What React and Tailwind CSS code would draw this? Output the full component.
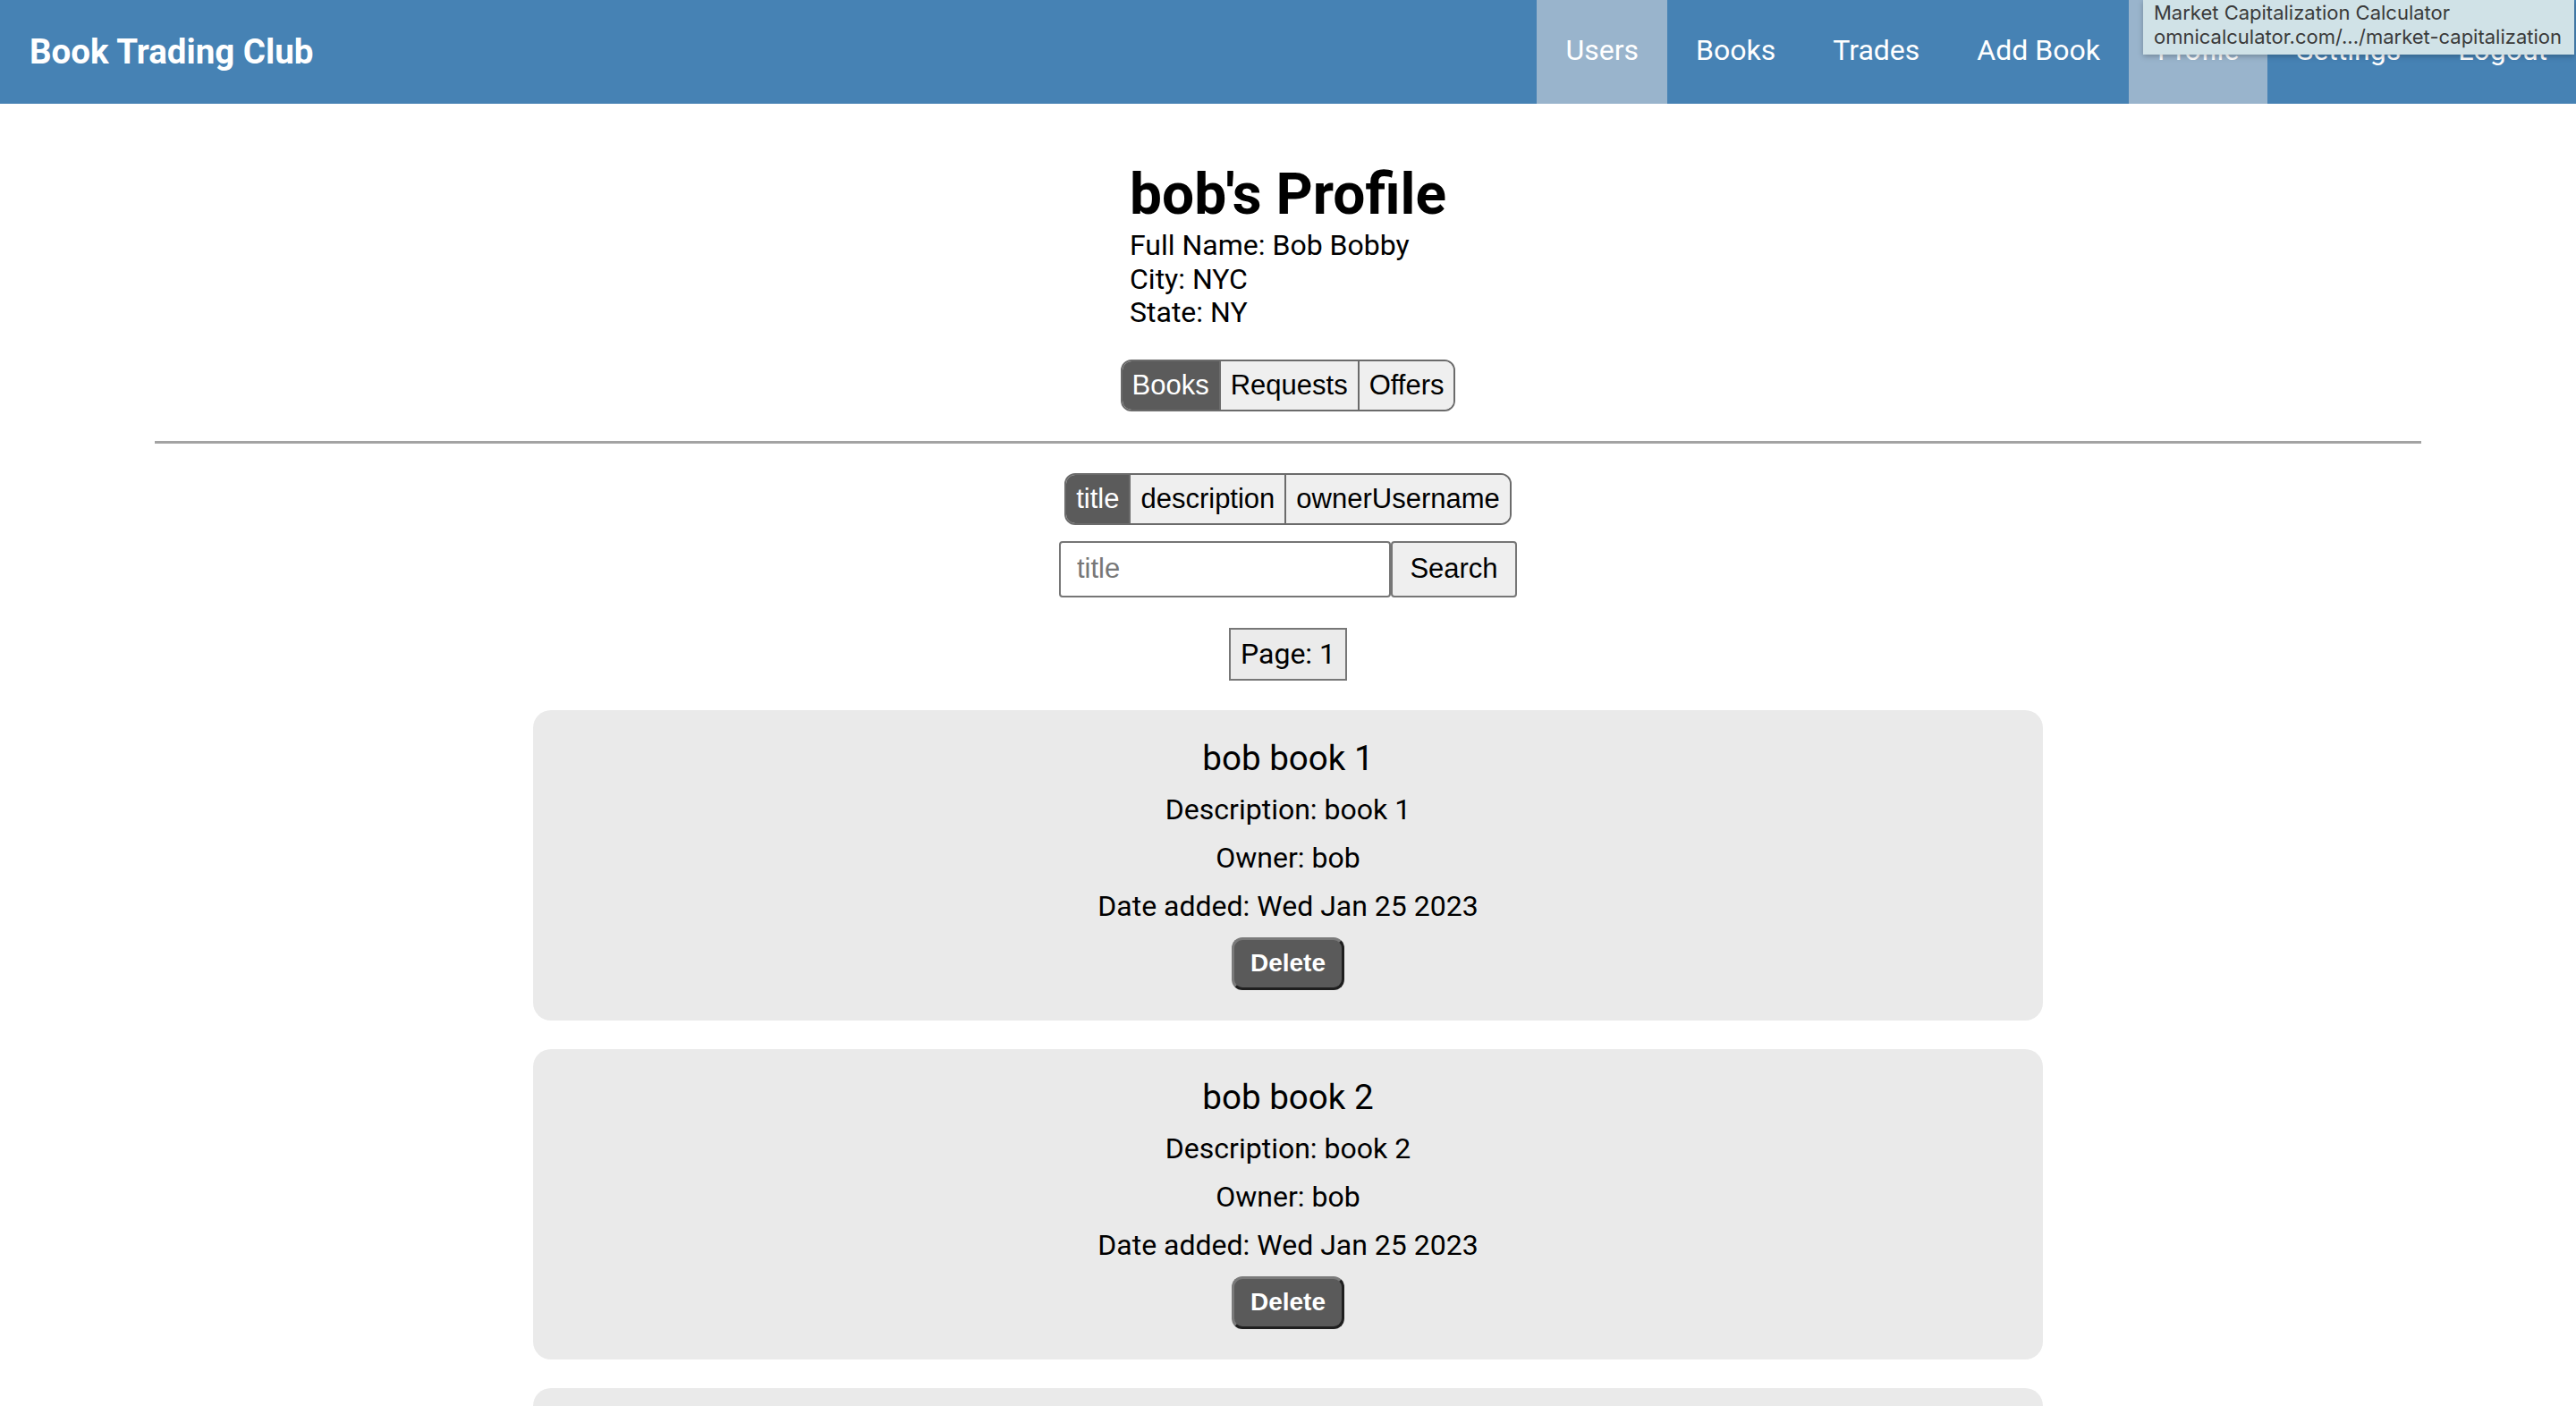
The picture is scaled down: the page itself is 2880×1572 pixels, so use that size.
import React, { useState } from "react";

const navItems = ["Users", "Books", "Trades", "Add Book", "Profile", "Settings", "Logout"];
const activeNav = ["Users", "Profile"];

const books = [
  { title: "bob book 1", description: "book 1", owner: "bob", date: "Wed Jan 25 2023" },
  { title: "bob book 2", description: "book 2", owner: "bob", date: "Wed Jan 25 2023" },
  { title: "bob book 3", description: "book 3", owner: "bob", date: "Wed Jan 25 2023" },
];

function Segmented({ options, active, onChange }) {
  return (
    <div className="flex overflow-hidden rounded-[12px] border-2 border-[#6b6b6b] font-['Liberation_Sans',Arial,sans-serif] text-[31px] leading-[36px]">
      {options.map((opt, i) => (
        <button
          key={opt}
          onClick={() => onChange(opt)}
          className={`px-[11px] py-[9px] ${i > 0 ? "border-l-2 border-[#6b6b6b]" : ""} ${
            active === opt ? "bg-[#5b5b5b] text-white" : "bg-[#efefef] text-black"
          }`}
        >
          {opt}
        </button>
      ))}
    </div>
  );
}

function BookCard({ book }) {
  return (
    <div className="flex w-[1688px] flex-col items-center gap-[16px] rounded-[20px] bg-[#eaeaea] pt-[31px] pb-[34px] text-black">
      <h3 className="text-[38.6px] leading-[45px] font-normal">{book.title}</h3>
      <p className="text-[32px] leading-[38px]">Description: {book.description}</p>
      <p className="text-[32px] leading-[38px]">Owner: {book.owner}</p>
      <p className="text-[32px] leading-[38px]">Date added: {book.date}</p>
      <button className="h-[59px] w-[126px] rounded-[12px] border-[3px] border-t-[#7a7a7a] border-l-[#7a7a7a] border-r-[#1f1f1f] border-b-[#1f1f1f] bg-[#5a5a5a] font-['Liberation_Sans',Arial,sans-serif] text-[28px] font-bold text-white">
        Delete
      </button>
    </div>
  );
}

export default function App() {
  const [tab, setTab] = useState("Books");
  const [field, setField] = useState("title");

  return (
    <div className="relative min-h-screen bg-white font-['Roboto',sans-serif] text-black">
      {/* Navbar */}
      <nav className="flex h-[116px] items-stretch bg-[#4682b4] text-white">
        <div className="flex items-center pl-[33px] text-[38.5px] font-bold">Book Trading Club</div>
        <div className="ml-auto flex">
          {navItems.map((item) => (
            <a
              key={item}
              className={`flex items-center px-[32px] pb-[4px] text-[32px] ${
                activeNav.includes(item) ? "bg-[#99b4cc]" : ""
              }`}
            >
              {item}
            </a>
          ))}
        </div>
      </nav>

      {/* Browser tooltip overlay */}
      <div className="absolute top-0 right-[2px] w-[482px] bg-[#d0e2e7] pl-[12px] pt-[1px] pb-[6px] font-['Inter',sans-serif] text-[22px] leading-[27px] text-[#3a3a3a] shadow-[0_2px_6px_rgba(0,0,0,0.25)]">
        <div>Market Capitalization Calculator</div>
        <div>omnicalculator.com/.../market-capitalization</div>
      </div>

      {/* Profile header */}
      <div className="mx-auto mt-[63px] w-fit">
        <h1 className="text-[64px] leading-[77px] font-bold">bob's Profile</h1>
        <div className="text-[32px] leading-[37.5px]">
          <div>Full Name: Bob Bobby</div>
          <div>City: NYC</div>
          <div>State: NY</div>
        </div>
      </div>

      <div className="mt-[33px] flex justify-center">
        <Segmented options={["Books", "Requests", "Offers"]} active={tab} onChange={setTab} />
      </div>

      <div className="mx-auto mt-[33px] h-[3px] w-[88%] bg-[#a3a3a3]" />

      <div className="mt-[33px] flex justify-center">
        <Segmented options={["title", "description", "ownerUsername"]} active={field} onChange={setField} />
      </div>

      <div className="mt-[18px] flex justify-center font-['Liberation_Sans',Arial,sans-serif] text-[31px]">
        <input
          placeholder={field}
          className="h-[63px] w-[371px] rounded-[4px] border-2 border-[#767676] bg-white px-[18px] text-black placeholder:text-[#777]"
        />
        <button className="h-[63px] w-[141px] rounded-[4px] border-2 border-[#767676] bg-[#efefef] text-black">
          Search
        </button>
      </div>

      <div className="mt-[34px] flex justify-center">
        <div className="border-2 border-[#777] bg-[#ebebeb] px-[11px] py-[8px] text-[32px] leading-[39px]">Page: 1</div>
      </div>

      <div className="mt-[33px] flex flex-col items-center gap-[32px] pb-[40px]">
        {books.map((b) => (
          <BookCard key={b.title} book={b} />
        ))}
      </div>
    </div>
  );
}
